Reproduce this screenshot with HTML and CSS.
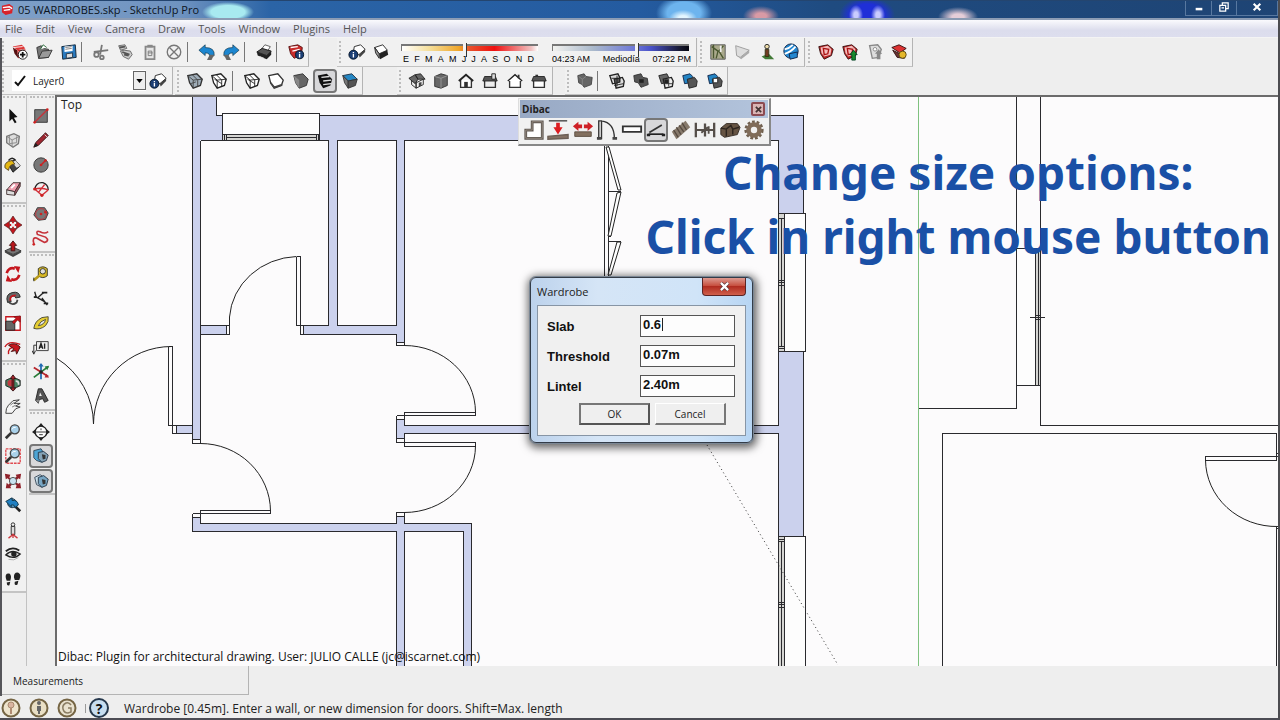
FILE: index.html
```html
<!DOCTYPE html>
<html lang="en">
<head>
<meta charset="utf-8">
<title>05 WARDROBES.skp - SketchUp Pro</title>
<link rel="stylesheet" href="styles.css">
</head>
<body>
<svg class="sprite" aria-hidden="true">
  <defs>
    <symbol id="new" viewBox="0 0 20 20"><path d="M2 4 12 2 16 6 7 8z" fill="#d33"/><path d="M3 5 13 4M5 9l8-1M6 12l7-1" stroke="#fff"/><path d="M2 5 7 8 8 17 4 12z" fill="#511"/><path d="M7 8 16 7 15 15 8 17z" fill="#c22"/><path d="M8 10l7-1" stroke="#fff"/><circle cx="13" cy="13" r="5" fill="#fff" stroke="#111"/><path d="M10 13h6M13 10v6" stroke="#111" stroke-width="2"/></symbol>
    <symbol id="open" viewBox="0 0 20 20"><path d="M2 5 7 3 9 6 15 7V16L4 17z" fill="#777" stroke="#333"/><path d="M4 17 8 9 19 8 15 16z" fill="#999" stroke="#333"/><path d="M6 7 9 2 13 5" fill="#fff" stroke="#263"/></symbol>
    <symbol id="save" viewBox="0 0 20 20"><path d="M2 4 17 2 18 16 3 18z" fill="#2a7bc0" stroke="#123"/><path d="M5 4 14 3V9L5 10z" fill="#fff"/><path d="M6 5l7-1M6 7l7-1" stroke="#777"/><path d="M7 12l7-1v5l-7 1z" fill="#ddd" stroke="#234"/></symbol>
    <symbol id="cut" viewBox="0 0 20 20"><path d="M2 10 18 8M11 2 9 13" stroke="#777" stroke-width="2"/><circle cx="5" cy="13" r="2.500" fill="none" stroke="#777" stroke-width="2"/><circle cx="11" cy="16" r="2" fill="none" stroke="#777" stroke-width="2"/></symbol>
    <symbol id="copy" viewBox="0 0 20 20"><path d="M3 3 10 2 12 6 5 8zM5 9 9 8l7 1 2 4-4 5-6-3z" fill="#ccc" stroke="#666"/><path d="M4 5l6-1M7 10l8 3M9 13l5 1" stroke="#555" stroke-width="2"/></symbol>
    <symbol id="paste" viewBox="0 0 20 20"><path d="M5 4H15V18H5z" fill="#e6e6e6" stroke="#888" stroke-width="2"/><path d="M7 2h6v3H7z" fill="#888"/><path d="M8 9h4v5H8zM8 11h5" fill="none" stroke="#777"/></symbol>
    <symbol id="del" viewBox="0 0 20 20"><circle cx="10" cy="10" r="7.500" fill="none" stroke="#777" stroke-width="1.500"/><path d="M5 5 15 15M15 5 5 15" stroke="#777" stroke-width="1.500"/></symbol>
    <symbol id="undo" viewBox="0 0 20 20"><path d="M1 8 8 2V5Q19 5 18 14L13 16Q14 11 8 11V14z" fill="#1c86d0" stroke="#134" stroke-width=".7"/><path d="M13 13h5l-3 6h-5z" fill="#666"/></symbol>
    <symbol id="redo" viewBox="0 0 20 20"><path d="M19 8 12 2V5Q1 5 2 14L7 16Q6 11 12 11V14z" fill="#1c86d0" stroke="#134" stroke-width=".7"/><path d="M7 13H2l3 6h5z" fill="#666"/></symbol>
    <symbol id="print" viewBox="0 0 20 20"><path d="M7 7 11 2 17 4 14 9z" fill="#fff" stroke="#555"/><path d="M2 10 8 6 18 9 13 14z" fill="#555" stroke="#111"/><path d="M2 10 13 14V18L3 14zM13 14 18 9V13L13 18z" fill="#222"/><path d="M5 15l5 2" stroke="#ddd"/></symbol>
    <symbol id="info" viewBox="0 0 20 20"><path d="M2 4 12 2 17 5 16 13 8 17 4 12z" fill="#c92b2b" stroke="#511"/><path d="M4 5l8-1M6 9l8-2" stroke="#fff" stroke-width="1.500"/><circle cx="14" cy="13" r="4.500" fill="#1c3f75" stroke="#012"/><path d="M14 10v1M14 12v4" stroke="#fff" stroke-width="1.500"/></symbol>
    <symbol id="sheetinfo" viewBox="0 0 20 20"><path d="M7 4 14 2 19 7 12 13 6 10z" fill="#fff" stroke="#222"/><path d="M12 13l7-6v3l-6 6z" fill="#444"/><circle cx="6" cy="13" r="5" fill="#1c3f75" stroke="#012"/><path d="M6 10v1M6 12v4" stroke="#fff" stroke-width="1.500"/></symbol>
    <symbol id="shadow" viewBox="0 0 20 20"><path d="M3 5 12 2 17 8 8 12z" fill="#fff" stroke="#222"/><path d="M3 5 8 12V17L4 11z" fill="#999" stroke="#222"/><path d="M8 12l9-4 1 5-9 5z" fill="#222"/></symbol>
    <symbol id="map" viewBox="0 0 20 20"><path d="M2 2H18V18H2z" fill="#aaa98c" stroke="#555"/><path d="M3 4 10 9 8 17M16 3l-5 6 5 8M5 2v15" stroke="#4a5830" stroke-width="1.500" fill="none"/><path d="M13 3v7" stroke="#eee" stroke-width="2"/></symbol>
    <symbol id="terrain" viewBox="0 0 20 20"><path d="M3 3 18 8 8 16 4 14z" fill="#ddd" stroke="#999"/><path d="M4 14 8 16 18 8v3l-9 7z" fill="#aaa"/></symbol>
    <symbol id="photo" viewBox="0 0 20 20"><path d="M4 15 12 12 18 18 8 18z" fill="#417a36"/><path d="M8 7h4v8H8z" fill="#713b22" stroke="#331"/><circle cx="10" cy="4" r="2.500" fill="#eda" stroke="#222"/></symbol>
    <symbol id="earth" viewBox="0 0 20 20"><circle cx="10" cy="9" r="8" fill="#2387d0" stroke="#124"/><path d="M3 7Q8 6 12 2M3 12Q10 10 15 4" stroke="#fff" stroke-width="2" fill="none"/><path d="M8 12l9-2v6l-8 2z" fill="#2387d0" stroke="#124"/></symbol>
    <symbol id="whouse" viewBox="0 0 20 20"><path d="M2 4 12 2 18 7 16 14 8 18 4 12z" fill="#b22" stroke="#311"/><path d="M4 5l8-2 4 4-1 6-7 2-3-4z" fill="#f4bcbc"/><path d="M7 6l6 1-1 5-4 1z" fill="none" stroke="#a11" stroke-width="1.500"/></symbol>
    <symbol id="whup" viewBox="0 0 20 20"><use href="#whouse"/><path d="M14 8 18 13H16V19H12V13H10z" fill="#178a2c" stroke="#042"/></symbol>
    <symbol id="whshare" viewBox="0 0 20 20"><path d="M4 3 13 2 17 7 14 16 7 17z" fill="#ddd" stroke="#888" stroke-width="1.500"/><path d="M14 7 18 12H16V18H12V12H10z" fill="#888"/><circle cx="10" cy="7" r="2" fill="#fff" stroke="#888"/></symbol>
    <symbol id="whext" viewBox="0 0 20 20"><path d="M2 5 10 2 18 6 11 11z" fill="#d33" stroke="#311"/><path d="M3 8l8 4 5 5-8-1z" fill="#633" stroke="#311"/><circle cx="14" cy="13" r="4" fill="#e4b72a" stroke="#541"/></symbol>
    <symbol id="xray" viewBox="0 0 20 20"><path d="M2 4 12 2 18 8 16 15 8 18 4 12z" fill="#9fadb8" stroke="#333" stroke-width="1.500"/><path d="M2 4 8 9 18 8M8 9V18M7 3l6 6v7M5 13l6-2" stroke="#444" fill="none"/></symbol>
    <symbol id="wire" viewBox="0 0 20 20"><path d="M2 4 12 2 18 8 16 15 8 18 4 12z" fill="#fff" stroke="#222" stroke-width="1.500"/><path d="M2 4 8 9 18 8M8 9V18M7 3l6 6v7M5 8l8 5" stroke="#222" fill="none"/></symbol>
    <symbol id="hidden" viewBox="0 0 20 20"><path d="M2 4 12 2 18 9 16 15 8 18 4 12z" fill="#fff" stroke="#333" stroke-width="1.500"/><path d="M4 12 8 17 17 14" stroke="#444" stroke-width="2" fill="none"/></symbol>
    <symbol id="shaded" viewBox="0 0 20 20"><path d="M2 4 12 2 18 8 16 15 8 18 4 12z" fill="#666" stroke="#333"/><path d="M2 4 8 9 8 18 4 12z" fill="#888"/></symbol>
    <symbol id="textured" viewBox="0 0 20 20"><path d="M2 4 12 2 18 8 16 15 8 18 4 12z" fill="#111"/><path d="M6 6l9-1M8 10l9-1M8 14l9-1" stroke="#ddd" stroke-width="1.500"/></symbol>
    <symbol id="mono" viewBox="0 0 20 20"><path d="M2 4 12 2 18 8 8 10z" fill="#2587c4" stroke="#234"/><path d="M2 4 8 10 8 18 4 12z" fill="#777" stroke="#333"/><path d="M8 10 18 8 16 15 8 18z" fill="#555" stroke="#333"/></symbol>
    <symbol id="iso" viewBox="0 0 20 20"><path d="M4 9 9 12 9 18 4 14zM9 12 17 8V14L9 18z" fill="#eee" stroke="#222"/><path d="M1 7 8 3 11 8 8 13zM8 3 14 2 19 8 11 8z" fill="#666" stroke="#222"/><path d="M12 12l3-1v4l-3 1z" fill="#444"/></symbol>
    <symbol id="top" viewBox="0 0 20 20"><path d="M3 5 10 2 17 4V15L10 18 3 16z" fill="#666" stroke="#333"/><path d="M3 5 10 7 17 4M10 7V18" stroke="#999" fill="none"/></symbol>
    <symbol id="front" viewBox="0 0 20 20"><path d="M4 9V17H16V9" fill="#fff" stroke="#333" stroke-width="1.500"/><path d="M2 10 10 3 18 10" fill="none" stroke="#222" stroke-width="2"/><path d="M8 11h4v6H8z" fill="#333"/></symbol>
    <symbol id="right" viewBox="0 0 20 20"><path d="M4 10V17H16V10" fill="#eee" stroke="#333" stroke-width="1.500"/><path d="M4 5H16L18 10H2z" fill="#555" stroke="#222"/><path d="M12 2h4v6h-4z" fill="#ddd" stroke="#222"/></symbol>
    <symbol id="back" viewBox="0 0 20 20"><path d="M4 9V17H16V9" fill="#fff" stroke="#333" stroke-width="1.500"/><path d="M2 10 10 3 18 10" fill="#fff" stroke="#222" stroke-width="1.500"/><path d="M14 3v4" stroke="#333" stroke-width="2"/></symbol>
    <symbol id="left" viewBox="0 0 20 20"><path d="M4 10V17H16V10" fill="#fff" stroke="#333" stroke-width="1.500"/><path d="M4 5H16L18 10H2z" fill="#555" stroke="#222"/><path d="M6 3h3v2H6z" fill="#333"/></symbol>
    <symbol id="shell" viewBox="0 0 20 20"><path d="M2 4 9 2 11 5 18 6 17 14 9 17 7 14 3 12z" fill="#666" stroke="#444"/><path d="M11 5 7 8V14M7 8 3 5" stroke="#888" fill="none"/></symbol>
    <symbol id="isect" viewBox="0 0 20 20"><path d="M2 4 11 2 13 6V11L5 13zM7 8 16 6 18 10 17 16 9 18z" fill="#ddd" stroke="#222" stroke-width="1.500"/><path d="M7 8 13 7V11L8 13zM4 7h10M10 4v12M7 15l10-2" fill="#555" stroke="#222"/></symbol>
    <symbol id="union" viewBox="0 0 20 20"><path d="M2 4 10 2 12 6 17 7 18 14 10 17 7 12 3 11z" fill="#555" stroke="#333"/><path d="M8 8h5v4H8z" fill="#222"/></symbol>
    <symbol id="trim" viewBox="0 0 20 20"><path d="M2 4 11 2 13 6V11L5 13z" fill="#666" stroke="#222"/><path d="M7 8 16 6 18 10 17 16 9 18z" fill="#eee" stroke="#222" stroke-width="1.500"/><path d="M8 8h5v5H8z" fill="#222"/><path d="M9 13h8M13 8v8" stroke="#333"/></symbol>
    <symbol id="subtract" viewBox="0 0 20 20"><path d="M2 4 10 2 13 5 10 12 4 13z" fill="#2384c4" stroke="#124"/><path d="M7 8 15 6 18 10 17 16 9 18z" fill="#555" stroke="#222"/></symbol>
    <symbol id="split" viewBox="0 0 20 20"><use href="#subtract"/><path d="M8 7h5v5H8z" fill="#fff" stroke="#222"/></symbol>

    <symbol id="select" viewBox="0 0 20 20"><path d="M6 2V16L9 13 12 18 14 17 11 12 15 11z" fill="#111"/></symbol>
    <symbol id="comp" viewBox="0 0 20 20"><path d="M3 6 11 3 17 6 16 14 10 18 3 13z" fill="#ddd" stroke="#777" stroke-width="1.500"/><path d="M3 6 9 10 17 6M9 10V17M6 5v9l8-1V6" fill="none" stroke="#888"/></symbol>
    <symbol id="paint" viewBox="0 0 20 20"><path d="M5 5Q9 0 13 5" fill="none" stroke="#222" stroke-width="1.500"/><path d="M4 8 12 4 18 11 10 18z" fill="#444" stroke="#111"/><path d="M9 7 13 5 18 11 14 13z" fill="#ddd"/><path d="M1 13Q0 6 9 5L12 9Q6 9 5 16z" fill="#e4b814" stroke="#542"/></symbol>
    <symbol id="erase" viewBox="0 0 20 20"><path d="M3 11 10 3 18 3 12 13z" fill="#ee9eae" stroke="#433"/><path d="M3 11 12 13V17L3 16z" fill="#ddd" stroke="#433"/><path d="M12 13 18 3V7L12 17z" fill="#a56" stroke="#433"/><path d="M8 9l4-4" stroke="#fff" stroke-width="2"/></symbol>
    <symbol id="move" viewBox="0 0 20 20"><path d="M10 0 14 6H6zM10 20 6 14H14zM0 10 6 6V14zM20 10 14 14V6z" fill="#c5161d" stroke="#411" stroke-width=".7"/><path d="M10 6V8M10 12V14M6 10H8M12 10H14" stroke="#c5161d" stroke-width="2"/></symbol>
    <symbol id="push" viewBox="0 0 20 20"><path d="M1 12 10 8 19 12 10 16z" fill="#777" stroke="#333"/><path d="M1 12 10 16V19L1 14zM19 12V14L10 19V16z" fill="#444"/><path d="M10 1 14 6H12V12H8V6H6z" fill="#b7151b" stroke="#411"/></symbol>
    <symbol id="rotate" viewBox="0 0 20 20"><path d="M3 9Q5 2 12 4M17 11Q15 18 8 16" fill="none" stroke="#c5161d" stroke-width="3"/><path d="M11 1 18 2 16 9zM9 19 2 18 4 11z" fill="#c5161d"/></symbol>
    <symbol id="follow" viewBox="0 0 20 20"><path d="M4 15Q1 6 9 4 17 2 18 9L13 10Q13 7 9 8 6 9 8 14z" fill="#666" stroke="#222"/><path d="M7 13Q6 7 13 7" fill="none" stroke="#c5161d" stroke-width="2"/><path d="M5 14q4 5 9 1l1-3" fill="none" stroke="#444" stroke-width="2"/></symbol>
    <symbol id="scale" viewBox="0 0 20 20"><path d="M2 3H18V18H2z" fill="#fff" stroke="#c5161d" stroke-width="1.500"/><path d="M2 8H12V18H2z" fill="#666" stroke="#222"/><path d="M18 2V9L15 7 11 11 9 9 13 5 11 3z" fill="#c5161d" stroke="#411" stroke-width=".5"/></symbol>
    <symbol id="offset" viewBox="0 0 20 20"><path d="M1 10Q5 2 18 7M5 18Q4 10 13 10" fill="none" stroke="#c5161d" stroke-width="1.500"/><path d="M5 8Q12 4 18 10L14 18 13 14 8 15 11 12z" fill="#c5161d" stroke="#411"/></symbol>
    <symbol id="orbit" viewBox="0 0 20 20"><path d="M2 7Q10 2 18 7V13Q10 18 2 13z" fill="#478261" stroke="#222"/><path d="M4 8Q8 5 10 8V14Q5 14 4 12z" fill="#c23a42"/><path d="M10 1 13 5H11V16H13L10 19 7 16H9V5H7z" fill="#a7242c" stroke="#311"/><path d="M13 8q4 0 3 4" stroke="#ddd" fill="none" stroke-width="2"/></symbol>
    <symbol id="pan" viewBox="0 0 20 20"><path d="M2 17Q2 11 5 8L10 3 17 2 11 6 18 6 13 9 18 10 13 12 9 17z" fill="#f5f5f5" stroke="#333"/><path d="M7 8l4-3M9 10l4-2" stroke="#777"/></symbol>
    <symbol id="zoom" viewBox="0 0 20 20"><path d="M8 11 2 17" stroke="#333" stroke-width="3"/><circle cx="12" cy="7" r="5" fill="#a9d1ea" stroke="#444" stroke-width="1.500"/><path d="M9 7q1-3 4-2" stroke="#fff" fill="none"/></symbol>
    <symbol id="zoomwin" viewBox="0 0 20 20"><path d="M2 2H18V18H2z" fill="none" stroke="#e04a50" stroke-width="1.500" stroke-dasharray="3 1"/><use href="#zoom"/></symbol>
    <symbol id="zoomext" viewBox="0 0 20 20"><path d="M1 2 7 3 6 6 8 8 6 9 4 7 2 8zM19 2 18 8 16 7 14 9 12 7 14 5 13 3zM2 18 3 12 5 14 7 12 9 14 7 16 8 18zM19 18 13 18 14 15 12 13 14 12 16 13 18 12z" fill="#90222b"/><circle cx="10" cy="10" r="4" fill="#c8e3f1" stroke="#444"/></symbol>
    <symbol id="prev" viewBox="0 0 20 20"><path d="M12 11 18 17" stroke="#222" stroke-width="3"/><circle cx="9" cy="8" r="5" fill="#5394bb" stroke="#234"/><path d="M2 6 9 2V5Q15 4 16 10L12 13Q12 9 8 10V12z" fill="#2180c2" stroke="#134"/></symbol>
    <symbol id="position" viewBox="0 0 20 20"><path d="M8 6H12V15H8z" fill="#ddd" stroke="#222"/><circle cx="10" cy="4" r="2" fill="#eee" stroke="#222"/><path d="M10 15 5 19M10 15 15 19M10 14V19" stroke="#cc3b41" stroke-width="1.500"/></symbol>
    <symbol id="look" viewBox="0 0 20 20"><path d="M2 7Q9 1 17 6" fill="none" stroke="#222" stroke-width="2"/><path d="M2 11Q9 4 18 10 11 17 2 11z" fill="#ddd" stroke="#222" stroke-width="1.500"/><circle cx="11" cy="10" r="3" fill="#222"/><path d="M5 16q6 2 11-2" stroke="#aaa" fill="none"/></symbol>
    <symbol id="walk" viewBox="0 0 20 20"><path d="M2 9Q1 3 6 4 9 6 7 12L3 12zM3 14 7 13 6 17Q3 18 3 14zM11 8Q11 2 16 3 20 5 17 11L12 11zM12 13 16 12 15 16Q11 18 12 13z" fill="#222"/></symbol>
    <symbol id="rect" viewBox="0 0 20 20"><path d="M3 3H17V17H3z" fill="#777" stroke="#333"/><path d="M3 17 17 3" stroke="#c5323a" stroke-width="1.500"/><circle cx="3" cy="17" r="1.500" fill="#c22"/><circle cx="17" cy="3" r="1.500" fill="#c22"/></symbol>
    <symbol id="line" viewBox="0 0 20 20"><path d="M2 18 4 13 15 2 18 5 7 16z" fill="#9f2631" stroke="#311"/><path d="M2 18 4 13 7 16z" fill="#222"/><path d="M14 4l3 3" stroke="#ddd"/></symbol>
    <symbol id="circle" viewBox="0 0 20 20"><circle cx="10" cy="10" r="8" fill="#777" stroke="#333"/><path d="M10 10 15 5" stroke="#c22" stroke-width="1.500"/><circle cx="10" cy="10" r="1.500" fill="#c22"/><circle cx="15" cy="5" r="1.500" fill="#c22"/></symbol>
    <symbol id="arc" viewBox="0 0 20 20"><path d="M3 10Q5 2 12 3 18 5 18 11" stroke="#222" fill="none" stroke-width="1.500"/><path d="M3 10 11 17 18 11M7 14 14 5M3 10Q11 8 18 11" stroke="#d22f38" stroke-width="1.500" fill="none"/><circle cx="3" cy="10" r="1.800" fill="#c22"/><circle cx="11" cy="17" r="1.800" fill="#c22"/></symbol>
    <symbol id="poly" viewBox="0 0 20 20"><path d="M6 3 14 3 18 9 15 16 7 17 2 11z" fill="#777" stroke="#333"/><circle cx="10" cy="10" r="6" fill="none" stroke="#c5323a"/><circle cx="10" cy="10" r="1.500" fill="#c22"/><circle cx="15" cy="8" r="1.500" fill="#c22"/></symbol>
    <symbol id="free" viewBox="0 0 20 20"><path d="M2 16Q0 9 5 10 10 13 14 15 20 13 15 9L6 6Q4 1 9 3 14 6 18 3" stroke="#c5323a" stroke-width="1.800" fill="none"/><circle cx="2" cy="17" r="1.500" fill="#c22"/></symbol>
    <symbol id="tape" viewBox="0 0 20 20"><path d="M7 4Q12 0 17 4V12Q12 16 7 12z" fill="#d8b824" stroke="#332"/><circle cx="12" cy="7" r="3" fill="#ddd" stroke="#332"/><path d="M8 12 2 17" stroke="#b89b1b" stroke-width="3"/><path d="M2 14v4" stroke="#222"/></symbol>
    <symbol id="dim" viewBox="0 0 20 20"><path d="M3 8 14 14M3 3 5 10M11 10 17 18M6 10 13 4" stroke="#222" stroke-width="1.500"/><path d="M2 9h3M13 16h5M11 4h6" stroke="#222" stroke-width="2"/></symbol>
    <symbol id="protractor" viewBox="0 0 20 20"><path d="M2 16Q3 8 11 4L18 3Q19 9 15 13 9 18 2 16z" fill="#e5cd33" stroke="#443"/><path d="M7 13Q9 8 15 6 14 12 7 13z" fill="#eee" stroke="#443"/></symbol>
    <symbol id="text" viewBox="0 0 20 20"><path d="M5 4H18V14H5z" fill="#eee" stroke="#333"/><path d="M8 12 10 6 12 12M9 10h3M14 6v6" stroke="#222" fill="none" stroke-width="1.500"/><path d="M5 8H2V17M0 14l2 4 2-4" fill="none" stroke="#222"/></symbol>
    <symbol id="axes" viewBox="0 0 20 20"><path d="M10 1V18" stroke="#236bb2" stroke-width="2"/><path d="M2 16 18 4" stroke="#287c38" stroke-width="2"/><path d="M2 5 18 15" stroke="#b5262e" stroke-width="2"/><path d="M10 0 7 4H13z" fill="#236bb2"/><path d="M19 3l-5 1 3 4z" fill="#287c38"/><path d="M19 16l-5 0 2-4z" fill="#b5262e"/><circle cx="10" cy="10" r="2" fill="#222"/></symbol>
    <symbol id="text3d" viewBox="0 0 20 20"><path d="M4 15 7 2 11 2 18 15 14 17 12 13 8 14 7 18z" fill="#555" stroke="#222"/><path d="M8 10 9 6 11 10z" fill="#eee"/><path d="M4 15l3 3 1-4" fill="#888"/></symbol>
    <symbol id="section" viewBox="0 0 20 20"><path d="M10 0 14 5H6zM10 20 6 15H14zM0 10 5 6V14zM20 10 15 14V6z" fill="#222"/><circle cx="10" cy="10" r="6.500" fill="#fff" stroke="#222" stroke-width="1.500"/><path d="M4 10H16M8 13h4M10 6v2" stroke="#222"/></symbol>
    <symbol id="cutA" viewBox="0 0 20 20"><path d="M2 4 10 2 12 5 11 17 5 15 2 12z" fill="#4da5d5" stroke="#345"/><path d="M7 6 13 5 18 9 16 15 11 17 7 13z" fill="#86a4b8" stroke="#234"/><path d="M11 8 15 9V13L12 14z" fill="#333"/></symbol>
    <symbol id="cutB" viewBox="0 0 20 20"><path d="M3 6 9 3 12 5 11 17 5 14z" fill="#c9deea" stroke="#345"/><path d="M7 6 13 4 18 8 16 15 11 17 7 13z" fill="#78a6c4" stroke="#234"/><path d="M11 8 15 9V13L12 14z" fill="#333"/></symbol>

    <symbol id="walls" viewBox="0 0 24 24"><path d="M10 3H21V21H3V12H10z" fill="#fff" stroke="#5d5650" stroke-width="3"/><path d="M10 3H21V21H3V12H10z" fill="none" stroke="#988d84"/></symbol>
    <symbol id="extw" viewBox="0 0 24 24"><path d="M2 2H22" stroke="#444" stroke-width="1.500"/><path d="M1 22V19L23 17V21z" fill="#847264" stroke="#6b5e54" stroke-width="1.500"/><path d="M10 4H14V9H17L12 17 7 9H10z" fill="#dc1c20"/></symbol>
    <symbol id="contw" viewBox="0 0 24 24"><path d="M3 14H21V19H3z" fill="#83705f" stroke="#5d4f43"/><path d="M1 8 7 3V6H11V10H7V13zM23 8 17 13V10H13V6H17V3z" fill="#cf2127"/></symbol>
    <symbol id="door" viewBox="0 0 24 24"><path d="M3 22V2H6V22M6 2Q20 4 20 21" fill="none" stroke="#333" stroke-width="1.500"/><path d="M1 21H6M18 21h5" stroke="#444" stroke-width="3"/></symbol>
    <symbol id="window" viewBox="0 0 24 24"><path d="M2 8H22V14H2z" fill="#fff" stroke="#333" stroke-width="2"/></symbol>
    <symbol id="wardrobe" viewBox="0 0 24 24"><path d="M4 15 19 6" stroke="#333" stroke-width="2"/><path d="M3 17H21" stroke="#222" stroke-width="2"/><path d="M1 18h4M19 18h4" stroke="#222" stroke-width="3"/></symbol>
    <symbol id="stairs" viewBox="0 0 24 24"><path d="M2 14 17 2 22 9 7 22z" fill="#86796b"/><path d="M4 12 9 20M7 9 12 17M10 7 15 14M13 4 18 12" stroke="#554a40" stroke-width="1.500"/></symbol>
    <symbol id="dibdim" viewBox="0 0 24 24"><path d="M2 4V20M12 5V19M22 4V20" stroke="#554e49" stroke-width="2.500"/><path d="M2 12H22M8 15l7-6M16 8v8" stroke="#554e49" stroke-width="2"/></symbol>
    <symbol id="to3d" viewBox="0 0 24 24"><path d="M2 10 8 5 20 5 23 9 20 17 6 20 2 17z" fill="#665443" stroke="#332a22"/><path d="M2 10 8 11 13 7 15 11 22 9M8 11V19M15 11V17" stroke="#2c241e" fill="none" stroke-width="1.500"/></symbol>
    <symbol id="gear" viewBox="0 0 24 24"><circle cx="12" cy="12" r="9" fill="none" stroke="#70604f" stroke-width="3" stroke-dasharray="3 2"/><circle cx="12" cy="12" r="6" fill="none" stroke="#806c59" stroke-width="5"/></symbol>
  </defs>
</svg>

<div class="window">
  <header class="titlebar">
    <svg class="app-icon" viewBox="0 0 14 14" aria-hidden="true"><path d="M1 3 9 1 13 4 12 11 5 13 1 10z" fill="#d8232a"/><path d="M2 5 9 4 12 6M3 8l7-1" fill="none" stroke="#fff" stroke-width="1.500"/></svg>
    <h1>05 WARDROBES.skp - SketchUp Pro</h1>
    <div class="caption">
      <button aria-label="Minimize"><svg viewBox="0 0 12 12"><path d="M2 7H10V10H2z" fill="#fff"/></svg></button>
      <button aria-label="Restore"><svg viewBox="0 0 12 12"><path d="M4 4V1H11V8H8M1 4H8V11H1zM3 7H6" fill="none" stroke="#fff" stroke-width="1.500"/></svg></button>
      <button aria-label="Close"><svg viewBox="0 0 12 12"><path d="M2 2 10 10M10 2 2 10" stroke="#fff" stroke-width="2.500"/></svg></button>
    </div>
  </header>

  <nav class="menubar" aria-label="Main menu">
    <button>File</button><button>Edit</button><button>View</button><button>Camera</button><button>Draw</button><button>Tools</button><button>Window</button><button>Plugins</button><button>Help</button>
  </nav>

  <div class="row row-one">
    <div class="bar gap-wide" role="toolbar" aria-label="Standard">
      <div class="set"><button aria-label="New"><svg><use href="#new"/></svg></button><button aria-label="Open"><svg><use href="#open"/></svg></button><button aria-label="Save"><svg><use href="#save"/></svg></button></div><i class="sep"></i>
      <div class="set"><button aria-label="Cut"><svg><use href="#cut"/></svg></button><button aria-label="Copy"><svg><use href="#copy"/></svg></button><button aria-label="Paste"><svg><use href="#paste"/></svg></button><button aria-label="Erase"><svg><use href="#del"/></svg></button></div><i class="sep"></i>
      <div class="set"><button aria-label="Undo"><svg><use href="#undo"/></svg></button><button aria-label="Redo"><svg><use href="#redo"/></svg></button></div><i class="sep"></i>
      <div class="set"><button aria-label="Print"><svg><use href="#print"/></svg></button></div><i class="sep"></i>
      <div class="set"><button aria-label="Model Info"><svg><use href="#info"/></svg></button></div>
    </div>
    <div class="bar" role="toolbar" aria-label="Shadows">
      <div class="set"><button aria-label="Shadow settings"><svg><use href="#sheetinfo"/></svg></button><button aria-label="Show shadows"><svg><use href="#shadow"/></svg></button></div>
      <div class="slider">
        <input class="range date" type="range" min="0" max="100" value="46" aria-label="Date">
        <div class="scale"><span>E</span><span>F</span><span>M</span><span>A</span><span>M</span><span>J</span><span>J</span><span>A</span><span>S</span><span>O</span><span>N</span><span>D</span></div>
      </div>
      <div class="slider">
        <input class="range time" type="range" min="0" max="100" value="62" aria-label="Time">
        <div class="scale hours"><span>04:23 AM</span><span>Mediodía</span><span>07:22 PM</span></div>
      </div>
    </div>
    <div class="bar" role="toolbar" aria-label="Google">
      <div class="set"><button aria-label="Add Location"><svg><use href="#map"/></svg></button><button aria-label="Toggle Terrain"><svg><use href="#terrain"/></svg></button><button aria-label="Photo Textures"><svg><use href="#photo"/></svg></button><button aria-label="Preview in Google Earth"><svg><use href="#earth"/></svg></button></div>
    </div>
    <div class="bar" role="toolbar" aria-label="Warehouse">
      <div class="set"><button aria-label="Get Models"><svg><use href="#whouse"/></svg></button><button aria-label="Share Model"><svg><use href="#whup"/></svg></button><button aria-label="Share Component"><svg><use href="#whshare"/></svg></button><button aria-label="Extension Warehouse"><svg><use href="#whext"/></svg></button></div>
    </div>
  </div>

  <div class="row row-two">
    <div class="bar" role="toolbar" aria-label="Layers">
      <label class="combo"><svg class="check" viewBox="0 0 12 12" aria-hidden="true"><path d="M1 7 4 10 11 1" fill="none" stroke="#111" stroke-width="2"/></svg>
        <select aria-label="Layer"><option>Layer0</option></select>
        <span class="drop"><svg viewBox="0 0 8 5"><path d="M0 0H8L4 5z"/></svg></span></label>
      <div class="set"><button aria-label="Layer Manager"><svg><use href="#sheetinfo"/></svg></button></div>
    </div>
    <div class="bar gap-mid" role="toolbar" aria-label="Styles">
      <div class="set"><button aria-label="X-Ray"><svg><use href="#xray"/></svg></button><button aria-label="Back Edges"><svg><use href="#wire"/></svg></button></div><i class="sep"></i>
      <div class="set"><button aria-label="Wireframe"><svg><use href="#wire"/></svg></button><button aria-label="Hidden Line"><svg><use href="#hidden"/></svg></button><button aria-label="Shaded"><svg><use href="#shaded"/></svg></button><button class="on" aria-label="Shaded With Textures"><svg><use href="#textured"/></svg></button><button aria-label="Monochrome"><svg><use href="#mono"/></svg></button></div>
    </div>
    <div class="bar gap-small" role="toolbar" aria-label="Views">
      <div class="set"><button aria-label="Iso"><svg><use href="#iso"/></svg></button><button aria-label="Top view"><svg><use href="#top"/></svg></button><button aria-label="Front view"><svg><use href="#front"/></svg></button><button aria-label="Right view"><svg><use href="#right"/></svg></button><button aria-label="Back view"><svg><use href="#back"/></svg></button><button aria-label="Left view"><svg><use href="#left"/></svg></button></div>
    </div>
    <div class="bar" role="toolbar" aria-label="Solid Tools">
      <div class="set"><button aria-label="Outer Shell"><svg><use href="#shell"/></svg></button></div><i class="sep"></i>
      <div class="set"><button aria-label="Intersect"><svg><use href="#isect"/></svg></button><button aria-label="Union"><svg><use href="#union"/></svg></button><button aria-label="Trim"><svg><use href="#trim"/></svg></button><button aria-label="Subtract"><svg><use href="#subtract"/></svg></button><button aria-label="Split"><svg><use href="#split"/></svg></button></div>
    </div>
  </div>

  <main class="work">
    <div class="column">
      <div class="vbar" role="toolbar" aria-label="Principal"><button aria-label="Select"><svg><use href="#select"/></svg></button><button aria-label="Make Component"><svg><use href="#comp"/></svg></button><button aria-label="Paint Bucket"><svg><use href="#paint"/></svg></button><button aria-label="Eraser"><svg><use href="#erase"/></svg></button></div>
      <div class="vbar" role="toolbar" aria-label="Modification"><button aria-label="Move"><svg><use href="#move"/></svg></button><button aria-label="Push/Pull"><svg><use href="#push"/></svg></button><button aria-label="Rotate"><svg><use href="#rotate"/></svg></button><button aria-label="Follow Me"><svg><use href="#follow"/></svg></button><button aria-label="Scale"><svg><use href="#scale"/></svg></button><button aria-label="Offset"><svg><use href="#offset"/></svg></button></div>
      <div class="vbar" role="toolbar" aria-label="Camera tools"><button aria-label="Orbit"><svg><use href="#orbit"/></svg></button><button aria-label="Pan"><svg><use href="#pan"/></svg></button><button aria-label="Zoom"><svg><use href="#zoom"/></svg></button><button aria-label="Zoom Window"><svg><use href="#zoomwin"/></svg></button><button aria-label="Zoom Extents"><svg><use href="#zoomext"/></svg></button><button aria-label="Previous"><svg><use href="#prev"/></svg></button><button aria-label="Position Camera"><svg><use href="#position"/></svg></button><button aria-label="Look Around"><svg><use href="#look"/></svg></button><button aria-label="Walk"><svg><use href="#walk"/></svg></button></div>
    </div>
    <div class="column second">
      <div class="vbar" role="toolbar" aria-label="Drawing"><button aria-label="Rectangle"><svg><use href="#rect"/></svg></button><button aria-label="Line"><svg><use href="#line"/></svg></button><button aria-label="Circle"><svg><use href="#circle"/></svg></button><button aria-label="Arc"><svg><use href="#arc"/></svg></button><button aria-label="Polygon"><svg><use href="#poly"/></svg></button><button aria-label="Freehand"><svg><use href="#free"/></svg></button></div>
      <div class="vbar" role="toolbar" aria-label="Construction"><button aria-label="Tape Measure"><svg><use href="#tape"/></svg></button><button aria-label="Dimension"><svg><use href="#dim"/></svg></button><button aria-label="Protractor"><svg><use href="#protractor"/></svg></button><button aria-label="Text"><svg><use href="#text"/></svg></button><button aria-label="Axes"><svg><use href="#axes"/></svg></button><button aria-label="3D Text"><svg><use href="#text3d"/></svg></button></div>
      <div class="vbar" role="toolbar" aria-label="Sections"><button aria-label="Section Plane"><svg><use href="#section"/></svg></button><button class="on" aria-label="Display Section Planes"><svg><use href="#cutA"/></svg></button><button class="on" aria-label="Display Section Cuts"><svg><use href="#cutB"/></svg></button></div>
    </div>

    <section class="canvas" aria-label="Model view">
      <svg class="plan" viewBox="57 97 1221 569" preserveAspectRatio="xMinYMin slice" role="img" aria-label="Floor plan">
        <g class="wall">
          <path d="M192 97H216.500V115.500H222.500V140H192z"/>
          <path d="M319.500 115.500H803.500V213.500H779V140.500H319.500z"/>
          <path d="M192 140H200.500V439.500H192V433.500H176V425.500H192z"/>
          <path d="M328.500 140H337.500V325.500H396.500V140H404.500V342H396.500V334.500H303.500V325.500H328.500z"/>
          <path d="M200.500 325.500H226V334.500H200.500z"/>
          <path d="M396.500 419.500H404.500V425.500H779V351.500H803.500V536.500H779V433.500H404.500V438.500H396.500z"/>
          <path d="M192 517H200.500V523H396.500V516.500H404.500V523H472V667H463.500V531.500H404.500V667H396.500V531.500H192z"/>
        </g>
        <g class="ink">
          <path d="M192.500 97V439.500M216.500 97V115.500H222M200.500 140.500V439.500M200.500 140.500H328.500V325.500M337.500 325.500V140.500H396.500V325.500H337.500M404.500 342V140.500H604.500M608.500 140.500H778.500V425.500H404.500V415.500M319.500 115.500H803.500V536.500M200.500 325.500H229.500V334.500H200.500M226.500 325.500V334.500M296.500 325.500H328.500M396.500 334.500H300.500V325.500M303.500 325.500V334.500M396.500 334.500V345.500H404.500V342M396.500 342.500H404.500"/>
          <path d="M296.500 256.500H300.500V325.500M296.500 256.500V325.500M168.500 346.500H172.500V433.500H192M168.500 346.500V425.500H192.500M176.500 425.500V433.500M192.500 433.500V443.500H200.500V439.500M192.500 439.500H200.500"/>
          <path d="M192.500 513.500H270.500V510.500H200.500V523.500H396.500V512.500H404.500V523.500H471.500V667M192.500 513.500V531.500H396.500V667M192.500 517.500H200.500M396.500 516.500H404.500M404.500 667V531.500H463.500V667"/>
          <path d="M396.500 415.500H475.500V412.500H404.500V419.500M396.500 415.500V442.500H475.500V446.500H404.500V433.500H778.500V667M396.500 419.500H404.500M396.500 438.500H404.500"/>
          <path d="M1016.500 97V408.500H918M1040.500 97V425.500H1278M942.500 667V433.500H1276.500V460.500H1205.500V456.500H1278M1276.500 527V667M1276 453.500H1278M1276 528.500H1278"/>
        </g>
        <g class="arc">
          <path d="M229.500 325V317A70 65 0 0 1 296.500 256.500"/>
          <path d="M93.500 424A78 78 0 0 1 171.500 346.500M57 358.500A78 78 0 0 1 93.500 424"/>
          <path d="M200.500 443.500A70 68 0 0 1 270.500 511M404.500 345.500A71 67 0 0 1 475.500 412M475.500 446A71 67 0 0 1 404.500 512.500M1205.500 460A71 67 0 0 0 1278 526.500"/>
        </g>
        <g class="ink pane">
          <path d="M222.500 113.500H319.500V140.500H222.500zM784.500 213.500H805.500V351.500H784.500zM784.500 536.500H805.500V667H784.500zM1016.500 248.500H1035.500V385.500H1016.500z"/>
        </g>
        <g class="ink glass">
          <path d="M222.500 134.500H319.500V140.500H222.500zM226.500 137.500H316.500M224.500 134V140M226.500 134V140M316.500 134V140M318.500 134V140"/>
          <path d="M778.500 213.500H784.500V351.500H778.500zM781.500 218V346M778.500 218.500H784M778.500 280.500H784M778.500 282.500H784M778.500 285.500H784M778.500 346.500H784M778.500 348.500H784"/>
          <path d="M778.500 536.500H784.500V667H778.500zM781.500 541V667M778.500 539.500H784M778.500 541.500H784M778.500 602.500H784M778.500 604.500H784M778.500 607.500H784"/>
          <path d="M1035.500 248.500H1040.500V385.500H1035.500zM1038.500 248V385M1030 317.500H1045M1036 315.500H1040M1036 319.500H1040"/>
        </g>
        <g class="ink">
          <path d="M604.500 146V280M608.500 146V280M608.500 191.500H621M608.500 236.500H611M608.500 241.500H621"/>
        </g>
        <path class="leaf" d="M606 147H609L621 190H618zM621 192 611 236H608L617 193zM621 242 611 275H608L617 242z"/>
        <path class="axis" d="M918.500 97V667"/>
        <path class="guide" d="M707 445 838 665"/>
      </svg>
      <span class="view-name">Top</span>
      <span class="credit">Dibac: Plugin for architectural drawing. User: JULIO CALLE (jc@iscarnet.com)</span>

      <p class="tip">Change size options:<br>Click in right mouse button</p>

      <section class="palette" aria-label="Dibac toolbar">
        <header><h2>Dibac</h2><button aria-label="Close Dibac"><svg viewBox="0 0 8 8"><path d="M1 1 7 7M7 1 1 7" stroke="#433" stroke-width="2"/></svg></button></header>
        <div class="set big"><button aria-label="Walls"><svg><use href="#walls"/></svg></button><button aria-label="Extend wall"><svg><use href="#extw"/></svg></button><button aria-label="Continue wall"><svg><use href="#contw"/></svg></button><button aria-label="Door"><svg><use href="#door"/></svg></button><button aria-label="Window"><svg><use href="#window"/></svg></button><button class="on" aria-label="Wardrobe"><svg><use href="#wardrobe"/></svg></button><button aria-label="Stairs"><svg><use href="#stairs"/></svg></button><button aria-label="Dimensions"><svg><use href="#dibdim"/></svg></button><button aria-label="Convert to 3D"><svg><use href="#to3d"/></svg></button><button aria-label="Settings"><svg><use href="#gear"/></svg></button></div>
      </section>

      <form class="dialog" role="dialog" aria-labelledby="dlg-title">
        <header><h2 id="dlg-title">Wardrobe</h2><button type="button" aria-label="Close dialog"><svg viewBox="0 0 12 10"><path d="M2 1 10 9M10 1 2 9" stroke="#533" stroke-width="4"/><path d="M2 1 10 9M10 1 2 9" stroke="#fff" stroke-width="2.500"/></svg></button></header>
        <div class="client">
          <div class="field"><label for="slab">Slab</label><span class="box"><input id="slab" value="0.6"></span></div>
          <div class="field"><label for="threshold">Threshold</label><span class="box"><input id="threshold" value="0.07m"></span></div>
          <div class="field"><label for="lintel">Lintel</label><span class="box"><input id="lintel" value="2.40m"></span></div>
          <div class="actions"><button type="button" class="default">OK</button><button type="button">Cancel</button></div>
        </div>
        <i class="caret"></i>
      </form>
    </section>
  </main>

  <div class="measure"><div class="measure-box">Measurements</div></div>
  <footer class="status">
    <div class="badges">
      <svg viewBox="0 0 20 20" aria-hidden="true"><circle cx="10" cy="10" r="8.500" fill="#eee4cd" stroke="#756544" stroke-width="2"/><circle cx="10" cy="7" r="3" fill="#d9b4a0" stroke="#a98a70"/><path d="M10 10V16" stroke="#b08b72" stroke-width="2"/></svg>
      <svg viewBox="0 0 20 20" aria-hidden="true"><circle cx="10" cy="10" r="8.500" fill="#e9dfc5" stroke="#756544" stroke-width="2"/><circle cx="10" cy="5" r="2" fill="#666"/><path d="M8 8H12V13H11V16H9V13H8z" fill="#666"/></svg>
      <svg viewBox="0 0 20 20" aria-hidden="true"><circle cx="10" cy="10" r="8.500" fill="#e9e2cf" stroke="#756544" stroke-width="2"/><path d="M14 7Q12 4 9 5 5 7 6 11 7 15 11 15L14 14V10H11" fill="none" stroke="#8a7d63" stroke-width="1.500"/></svg>
    </div>
    <i class="bar-line"></i>
    <button class="help" aria-label="Help center">?</button>
    <span>Wardrobe [0.45m]. Enter a wall, or new dimension for doors. Shift=Max. length</span>
  </footer>
</div>
</body>
</html>
```
FILE: styles.css
```css
* { box-sizing: border-box; }

body {
  margin: 0;
  font-family: "Open Sans", "Noto Sans", sans-serif;
  font-size: 12px;
  color: #222;
}

button {
  margin: 0;
  padding: 0;
  border: 0;
  background: none;
  font: inherit;
  color: inherit;
}

h1, h2, p { margin: 0; font-size: inherit; font-weight: normal; }

.sprite { display: none; }

.window {
  display: flex;
  flex-direction: column;
  height: 100vh;
  min-height: 480px;
  overflow: hidden;
  background: #eeeeee;
  border-right: 2px solid #4c4c50;
  border-bottom: 2px solid #4c4c54;
}

/* Title bar */
.titlebar {
  display: flex;
  align-items: center;
  flex: none;
  height: 20px;
  padding-left: 1px;
  border-top: 1px solid #24456f;
  border-bottom: 2px solid #8c9cb4;
  background:
    radial-gradient(ellipse 26px 10px at 228px 11px, #a8eaf0 65%, transparent),
    radial-gradient(ellipse 14px 8px at 683px 17px, #e4f6ff 30%, transparent),
    radial-gradient(ellipse 28px 18px at 684px 12px, #6db4ee 60%, transparent),
    radial-gradient(ellipse 18px 10px at 761px 15px, #d99aa5 30%, transparent),
    radial-gradient(ellipse 7px 10px at 856px 14px, #c9ccff 30%, transparent),
    radial-gradient(ellipse 7px 10px at 878px 14px, #c9ccff 30%, transparent),
    radial-gradient(ellipse 28px 18px at 867px 14px, #1f2fd8 60%, transparent),
    radial-gradient(ellipse 20px 10px at 958px 16px, #e5cdd8 30%, transparent),
    linear-gradient(90deg, #7fa0c8 0, #6f93c0 180px, #2b64a6 270px, #245ba0 50%, #1f4b80 65%, #1e4474 100%);
}

.titlebar h1 { flex: 1; margin-left: 4px; font-size: 11px; line-height: 16px; color: #0c1422; }
.app-icon { width: 13px; height: 13px; }

.caption { display: flex; align-self: flex-start; border: 1px solid #5878a0; border-top: 0; }
.caption button { display: grid; place-items: center; width: 25px; height: 14px; padding-bottom: 2px; }
.caption button + button { border-left: 1px solid #5878a0; }
.caption button:last-child { width: 41px; }
.caption svg { width: 10px; height: 10px; }

/* Menu bar */
.menubar {
  display: flex;
  flex: none;
  height: 18px;
  background: linear-gradient(#fafafd, #dcdded 60%, #dddeee);
  border-bottom: 1px solid #f4f4f4;
}
.menubar button { padding: 0 6px 0 5px; margin-right: 2px; font-size: 11px; line-height: 17px; color: #555; }

/* Horizontal toolbars */
.row { display: flex; flex: none; align-items: stretch; border-left: 2px solid #55555a; }
.row-one { height: 29px; }
.row-two { height: 28px; }

.bar {
  display: flex;
  align-items: center;
  margin-right: 2px;
  padding-left: 4px;
  border-right: 1px solid #b4b4b4;
  border-bottom: 1px solid #c2c2c2;
  background: #f1f1f1;
}
.bar::before {
  content: "";
  width: 2px;
  height: 22px;
  margin: 0 2px 0 -4px;
  border-left: 2px dotted #bdbdbd;
}
.row-two .bar + .bar, .row-one .bar + .bar { padding-left: 6px; }
.row-one .bar + .bar { margin-right: 1px; }
.row .gap-wide { margin-right: 28px; }
.row .gap-mid { margin-right: 34px; }
.row .gap-small { margin-right: 12px; }

.set { display: grid; grid-auto-flow: column; grid-auto-columns: 24px 25px; }
.set button, .vbar button { display: grid; place-items: center; width: 24px; height: 24px; }
.set svg, .vbar svg { width: 18px; height: 18px; }
.set .on, .vbar .on { border: 2px solid #777; border-radius: 4px; background: #d8d8da; }

.sep { width: 8px; height: 20px; border-left: 1px solid #777; }

.slider { width: 137px; margin: 0 7px; }
.range {
  display: block;
  appearance: none;
  width: 100%;
  height: 13px;
  margin: 0;
  background: none;
}
.range::-webkit-slider-runnable-track { height: 7px; border-top: 2px solid #777; border-left: 1px solid #777; }
.date::-webkit-slider-runnable-track { background: linear-gradient(90deg, #fff, #f5df9b 20%, #efa629 42%, #e8502a 50%, #ef1010 68%, #f0c0c0 95%, #fff); }
.time::-webkit-slider-runnable-track { background: linear-gradient(90deg, #f2f2ef, #a9b8cb 30%, #6e78d8 60%, #4a52c8 72%, #15162c 94%, #050510); }
.range::-webkit-slider-thumb { appearance: none; width: 4px; height: 14px; margin-top: -3px; background: #f4f4f4; border-right: 1px solid #333; }
.scale { display: flex; justify-content: space-between; padding: 0 4px 0 2px; font: 9px/10px "Liberation Sans", Arial, sans-serif; color: #000; }
.hours { padding: 0; margin-right: -2px; }

.combo { display: flex; align-items: center; width: 134px; height: 21px; margin-left: 4px; background: #fff; }
.row-two .bar:first-child { padding-right: 2px; }
.check { width: 12px; height: 12px; margin-left: 2px; }
.combo select { flex: 1; min-width: 0; appearance: none; margin: 0; padding: 0 0 0 7px; border: 0; background: none; font: 10px "Open Sans", sans-serif; color: #222; }
.drop { display: grid; place-items: center; width: 13px; height: 19px; border: 1px solid #666; background: #eee; }
.drop svg { width: 7px; height: 4px; }

/* Work area */
.work { display: flex; flex: 1; min-height: 0; border-left: 2px solid #55555a; }
.column { width: 25px; flex: none; border-right: 1px solid #c2c2c2; }
.column .vbar button { width: 22px; }
.second { width: 28px; border-right: 0; padding-left: 2px; }
.second .vbar button { width: 24px; }
.vbar { display: grid; grid-template-rows: 9px; grid-auto-rows: 24px 25px; border-bottom: 2px solid #c4c4c4; background: #f1f1f1; }
.vbar::before { content: ""; height: 2px; align-self: end; margin: 0 1px 4px; border-top: 2px dotted #bdbdbd; }

.canvas {
  position: relative;
  flex: 1;
  min-width: 0;
  overflow: hidden;
  border-left: 2px solid #6b6b6b;
  border-top: 2px solid #6b6b6b;
  background: #fcfbfc;
}
.plan { display: block; width: 100%; height: 100%; }
.wall { fill: #cbd1ed; }
.ink { fill: none; stroke: #2a2a2e; stroke-width: 1; shape-rendering: crispEdges; }
.arc { fill: none; stroke: #222; stroke-width: 1; }
.pane { fill: #fdfdfd; }
.glass { fill: #d5d5d2; }
.leaf { fill: #fff; stroke: #222; stroke-width: 1; }
.axis { stroke: #7fc17f; stroke-width: 1; }
.guide { stroke: #333; stroke-width: 1; stroke-dasharray: 1 3; }

.view-name { position: absolute; left: 4px; top: 0; font-size: 12px; line-height: 16px; }
.credit { position: absolute; left: 1px; bottom: 1px; font-size: 12px; line-height: 16px; white-space: nowrap; color: #111; }

.tip {
  position: absolute;
  right: 7px;
  top: 43px;
  text-align: center;
  white-space: nowrap;
  font: bold 46px/64px "Noto Sans", "Open Sans", sans-serif;
  color: #1a50a6;
}

/* Floating Dibac toolbar */
.palette {
  position: absolute;
  left: 461px;
  top: 1px;
  width: 253px;
  padding: 1px 1px 2px 3px;
  border: 1px solid #ddd;
  border-right: 2px solid #888;
  border-bottom: 2px solid #888;
  background: #f1f1f1;
}
.palette header { display: flex; align-items: center; justify-content: space-between; height: 18px; margin-left: -2px; padding: 0 3px 0 2px; background: linear-gradient(90deg, #98a9c4, #b3c4dc); }
.palette h2 { font-size: 10px; font-weight: bold; color: #222; }
.palette header button { display: grid; place-items: center; width: 14px; height: 14px; border: 2px solid #8c4b52; border-radius: 2px; background: #d9b4b4; }
.palette header svg { width: 7px; height: 7px; }
.big svg { width: 22px; height: 22px; }
.big .on svg { width: 20px; height: 20px; }

/* Wardrobe dialog */
.dialog {
  position: absolute;
  left: 473px;
  top: 180px;
  width: 223px;
  padding: 0 6px 6px;
  border: 1px solid #333c48;
  border-radius: 6px;
  background: linear-gradient(90deg, #bcd2ec, #d5e5f6 30%, #d0e4f8 75%, #b7d5f3);
  box-shadow: 0 0 0 1px #7b8794, 1px 2px 8px 3px rgba(0, 0, 0, .6);
}
.dialog header { display: flex; justify-content: space-between; height: 27px; }
.dialog h2 { font-size: 11px; line-height: 27px; color: #222; }
.dialog header button { display: grid; place-items: center; width: 44px; height: 18px; border: 1px solid #5b2424; border-top: 0; border-radius: 0 0 4px 4px; background: linear-gradient(#dd9a90, #c75040 45%, #b02c20 50%, #d0604c); }
.dialog header svg { width: 11px; height: 9px; }
.client { display: flex; flex-direction: column; gap: 8px; padding: 9px 10px 10px 9px; border: 1px solid #8795a5; background: #f0f0f0; }
.field { display: flex; justify-content: space-between; align-items: center; font: bold 13px "Liberation Sans", Arial, sans-serif; color: #111; }
.box { display: block; width: 95px; height: 22px; border: 1px solid #555; background: #fdfdfd; }
.box input { display: block; width: 100%; height: 18px; padding: 0 2px; border: 0; background: none; font: bold 13px/18px "Liberation Sans", Arial, sans-serif; color: #111; outline: 0; }
.actions { display: flex; gap: 5px; justify-content: flex-end; margin: -2px 9px 0 0; }
.actions button { width: 71px; height: 22px; border: 1px solid #fff; border-right: 2px solid #777; border-bottom: 2px solid #777; background: #efefef; font-size: 10px; line-height: 18px; }
.actions .default { border: 2px solid #777; border-right-color: #555; border-bottom-color: #555; }
.caret { position: absolute; left: 131px; top: 40px; width: 1px; height: 13px; background: #222; }

/* Measurements and status */
.measure { flex: none; height: 30px; border-left: 2px solid #55555a; }
.measure-box { width: 247px; height: 29px; padding-left: 11px; border-right: 1px solid #b4b4b4; border-bottom: 1px solid #b4b4b4; font-size: 10px; line-height: 30px; }
.status { display: flex; flex: none; align-items: center; height: 22px; padding: 2px 0 0 1px; }
.badges { display: flex; gap: 8px; }
.badges svg { display: block; width: 20px; height: 20px; }
.bar-line { width: 1px; height: 9px; margin: 0 3px 0 8px; background: #999; }
.help { width: 20px; height: 20px; margin-right: 15px; border: 2px solid #26384c; border-radius: 50%; background: #c8def0; font-size: 14px; font-weight: bold; line-height: 15px; color: #111; }
```
